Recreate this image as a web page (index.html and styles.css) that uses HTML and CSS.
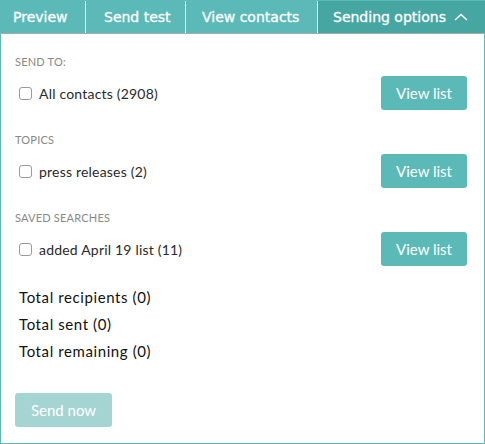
FILE: index.html
```html
<!DOCTYPE html>
<html lang="en">
<head>
  <meta charset="UTF-8">
  <title>Sending options</title>
  <link rel="stylesheet" href="styles.css">
</head>
<body>

<div class="panel">
  <nav class="tabs">
    <a class="tab tab-preview" href="#">Preview</a>
    <a class="tab tab-test" href="#">Send test</a>
    <a class="tab tab-contacts" href="#">View contacts</a>
    <a class="tab tab-options active" href="#">Sending options
      <svg class="caret" width="14" height="8" viewBox="0 0 14 8"><path d="M1 7 L7 1.5 L13 7" fill="none" stroke="#fff" stroke-width="1.4"/></svg>
    </a>
  </nav>

  <div class="body">
    <div class="section">
      <div class="heading">SEND TO:</div>
      <div class="row">
        <label><input type="checkbox"> All contacts (2908)</label>
        <button class="btn">View list</button>
      </div>
    </div>

    <div class="section">
      <div class="heading">TOPICS</div>
      <div class="row">
        <label><input type="checkbox"> press releases (2)</label>
        <button class="btn">View list</button>
      </div>
    </div>

    <div class="section">
      <div class="heading">SAVED SEARCHES</div>
      <div class="row">
        <label><input type="checkbox"> added April 19 list (11)</label>
        <button class="btn">View list</button>
      </div>
    </div>

    <div class="totals">
      <div>Total recipients (0)</div>
      <div>Total sent (0)</div>
      <div>Total remaining (0)</div>
    </div>

    <button class="btn btn-send" disabled>Send now</button>
  </div>
</div>

</body>
</html>
```

FILE: styles.css
```css
body {
  margin: 0;
  background: #fff;
  font-family: 'Lato', 'Open Sans', sans-serif;
}

.panel {
  width: 485px;
  height: 444px;
  box-sizing: border-box;
  border: 1px solid #5bbab7;
  border-top: none;
  background: #fff;
}

.tabs {
  display: flex;
  height: 32px;
  margin: 0 -1px;
  padding-top: 1px;
  background: #5bbab7;
  border-bottom: 1px solid #a9a9a9;
}

.tab {
  display: flex;
  align-items: center;
  gap: 8px;
  padding: 0 13px;
  box-sizing: border-box;
  color: #fff;
  text-decoration: none;
  white-space: nowrap;
  font-family: 'DejaVu Sans', Verdana, sans-serif;
  font-size: 14px;
  -webkit-text-stroke: 0.3px #fff;
  border-right: 1px solid #fff;
}

.tab-preview { width: 86px; }
.tab-test { width: 100px; padding-left: 18px; }
.tab-contacts { width: 132px; padding-left: 16px; }

.tab.active {
  flex: 1;
  border-right: none;
  background: #46a6a2;
  padding-left: 15px;
}

.caret {
  margin-top: -1px;
}

.body {
  padding: 18px 17px 0 14px;
}

.section + .section {
  margin-top: 20px;
}

.heading {
  color: #888;
  font-size: 11px;
  letter-spacing: 0.2px;
  height: 20px;
  padding-top: 3px;
}

.row {
  display: flex;
  justify-content: space-between;
  align-items: center;
  height: 34px;
  margin-top: 1px;
}

.row label {
  display: flex;
  align-items: center;
  gap: 7px;
  font-size: 14px;
  letter-spacing: 0.2px;
  color: #2a2a2a;
  padding-left: 4px;
}

.row input {
  appearance: none;
  width: 13px;
  height: 13px;
  margin: 0;
  border: 1px solid #9a9a9a;
  border-radius: 3px;
  background: #fff;
}

.btn {
  height: 34px;
  padding: 0 15px;
  border: none;
  border-radius: 3px;
  background: #5bbab7;
  color: #fff;
  font-family: 'Lato', 'Open Sans', sans-serif;
  font-size: 15px;
  cursor: pointer;
}

.totals {
  padding: 18px 0 0 4px;
  font-size: 15px;
  letter-spacing: 0.6px;
  color: #111;
  line-height: 27px;
}

.btn-send {
  margin-top: 28px;
  width: 97px;
  padding: 0;
  background: #a5d5d3;
  cursor: default;
}
```
